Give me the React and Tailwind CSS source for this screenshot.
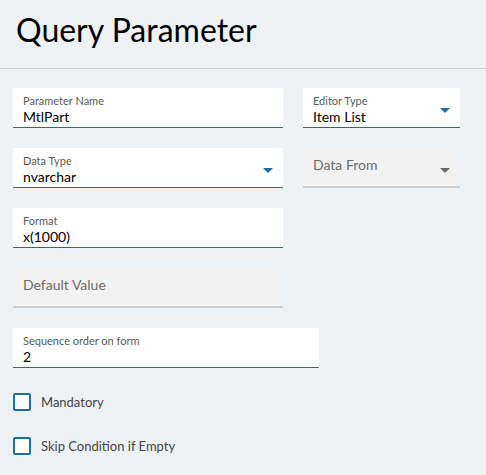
import React from "react";

const font = { fontFamily: '"Source Sans Pro", Lato, "Noto Sans", sans-serif' };

const Arrow = ({ color }) => (
  <svg width="10" height="5" viewBox="0 0 10 5" className="absolute right-[10px] top-[20px]">
    <path d="M0 0h10L5 5z" fill={color} />
  </svg>
);

const Field = ({ label, value, width, select }) => (
  <div
    className={`relative h-10 bg-white border-b border-[#1a6da5] px-[10px] pt-[6px] ${width}`}
  >
    <div className="text-[11px] leading-[14px] text-[#5a5a5a]">{label}</div>
    <div className="text-[14px] leading-[17px] text-black">{value}</div>
    {select && <Arrow color="#1a6da5" />}
  </div>
);

const DisabledField = ({ label, width, select }) => (
  <div className={`relative h-10 bg-[#f2f2f2] border-b-2 border-[#cfcfcf] px-[10px] pt-[8px] ${width}`}>
    <div className="text-[14px] leading-[18px] text-[#6b6b6b]">{label}</div>
    {select && <Arrow color="#666666" />}
  </div>
);

const Check = ({ label }) => (
  <label className="flex items-center gap-[10px] h-[18px]">
    <span className="w-[18px] h-[18px] border-2 border-[#1a6da5] bg-white rounded-[2px]" />
    <span className="text-[13px] leading-[18px] text-[#444]">{label}</span>
  </label>
);

export default function App() {
  return (
    <div className="w-[486px] h-[475px] bg-[#eff2f5] overflow-hidden" style={font}>
      <div className="h-[69px] border-b border-[#cccccc] pl-[16px] pt-[8px]">
        <h1 className="text-[32px] leading-[44px] text-black">Query Parameter</h1>
      </div>
      <div className="px-[13px] pt-[19px]">
        <div className="grid grid-cols-[270px_157px] gap-x-5 gap-y-5">
          <Field label="Parameter Name" value="MtlPart" />
          <Field label="Editor Type" value="Item List" select />
          <Field label="Data Type" value="nvarchar" select />
          <DisabledField label="Data From" select />
          <Field label="Format" value="x(1000)" />
          <div />
          <DisabledField label="Default Value" />
          <div />
        </div>
        <div className="mt-5">
          <Field label="Sequence order on form" value="2" width="w-[306px]" />
        </div>
        <div className="mt-[25px] flex flex-col gap-[26px]">
          <Check label="Mandatory" />
          <Check label="Skip Condition if Empty" />
        </div>
      </div>
    </div>
  );
}
